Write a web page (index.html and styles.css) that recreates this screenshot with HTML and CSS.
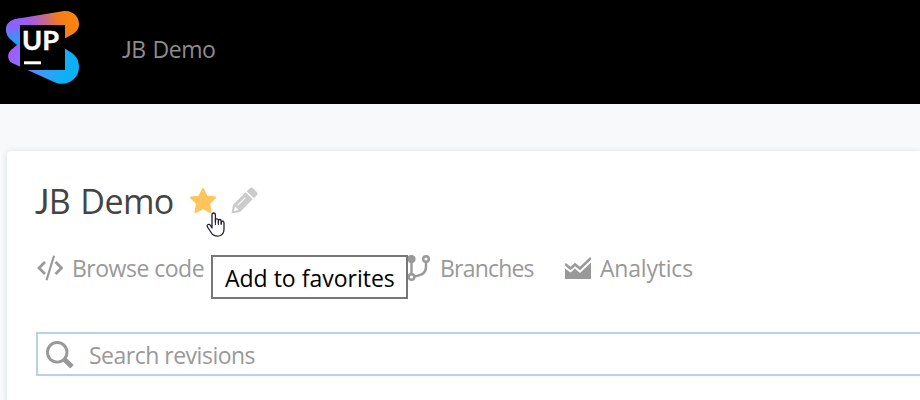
FILE: index.html
```html
<!DOCTYPE html>
<html lang="en">
<head>
<meta charset="utf-8">
<title>JB Demo</title>
<link rel="stylesheet" href="styles.css">
</head>
<body>
<header class="topbar">
  <svg class="logo" viewBox="0 0 100 100" width="100" height="100" aria-label="Upsource">
    <defs>
      <linearGradient id="top" gradientUnits="userSpaceOnUse" x1="7" y1="36" x2="78" y2="20">
        <stop offset="0" stop-color="#1aa5ff"/><stop offset=".16" stop-color="#8b62ff"/><stop offset=".35" stop-color="#a35ce8"/><stop offset=".58" stop-color="#c96a86"/><stop offset=".72" stop-color="#ee7b22"/><stop offset="1" stop-color="#ff8608"/>
      </linearGradient>
      <linearGradient id="left" gradientUnits="userSpaceOnUse" x1="12" y1="20" x2="16" y2="44">
        <stop offset="0" stop-color="#9a5cff"/><stop offset=".35" stop-color="#8268ff"/><stop offset="1" stop-color="#12a9f8"/>
      </linearGradient>
      <linearGradient id="bottom" gradientUnits="userSpaceOnUse" x1="10" y1="50" x2="66" y2="72">
        <stop offset="0" stop-color="#a65aff"/><stop offset=".3" stop-color="#8270ff"/><stop offset=".65" stop-color="#369dfa"/><stop offset="1" stop-color="#0cb0f5"/>
      </linearGradient>
    </defs>
    <path fill="url(#bottom)" d="M20 42.500 11.500 49.500C7 53 7 60 12 63L53 81.500C65 88 79 80 79 67C79 60 76 56 72 53L64 48Z"/>
    <path fill="url(#top)" d="M17 18.800 64 11C73 10 79 17 79 24C79 29 76 32 73 34L64 39 20 44C10 38 6 34 6 29C6 24 10 20 17 18.800Z"/>
    <path fill="url(#left)" d="M20 18.500C12 19 6 23 6 30C6 34 8 37 10 39L17 45 20 43Z"/>
    <path d="M20 25H65V70H20Z"/>
    <path fill="#fff" d="M24 61.300H41V64.300H24Z"/>
    <text class="logo-text" x="22" y="49.700" textLength="37" lengthAdjust="spacingAndGlyphs">UP</text>
  </svg>
  <span class="project"><span class="initial">J</span>B Demo</span>
</header>
<main class="card">
  <div class="heading">
    <h1><span class="initial">J</span>B Demo</h1>
    <svg class="star" viewBox="0 0 28 28" width="28" height="28"><path fill="#ffc45b" stroke="#ffc45b" stroke-width="2" stroke-linejoin="round" d="M14 2 17.600 9.400 26 10.500 20 16.500 21.500 25 14 21.200 6.500 25 8 16.500 2 10.500 10.400 9.400Z"/></svg>
    <svg class="pencil" viewBox="0 0 28 28" width="28" height="28"><g transform="translate(1.500 26.500) rotate(-45)" fill="#cbcbcb"><path fill-rule="evenodd" d="M0 0 7-5H25V5H7ZM3.500 0 7.500 2.500V-2.500ZM10-2V-.9H21V-2Z"/><path d="M26.500-5H30.500Q33-5 33-3V3Q33 5 30.500 5H26.500Z"/></g></svg>
  </div>
  <nav class="links">
    <a class="code"><svg viewBox="0 0 26 26" width="26" height="26" fill="none" stroke="#999"><path stroke-width="2.700" d="M8 7 2 13 8 19M18.500 7 24.500 13 18.500 19"/><path stroke-width="2.200" d="M17 .8 9.500 25.200"/></svg><span>Browse code</span></a>
    <a class="branches"><svg viewBox="0 0 26 26" width="26" height="26" fill="none" stroke="#999" stroke-width="2.400"><circle cx="7.500" cy="4" r="2.900" fill="#999"/><circle cx="22" cy="4" r="2.800"/><circle cx="7.500" cy="22" r="2.800"/><path d="M7.500 7V19M22 7V12C22 18 18 20 10.500 21.500"/></svg><span>Branches</span></a>
    <a class="analytics"><svg viewBox="0 0 26 26" width="26" height="26"><path fill="#999" d="M0 13.500 5.500 17.500 10 13.500 15 18 26 7.500V24H0Z"/><path fill="none" stroke="#999" stroke-width="2.500" d="M0 9 5.500 13.500 10 9.500 15 13.500 26 3"/></svg><span>Analytics</span></a>
  </nav>
  <div class="search">
    <svg viewBox="0 0 30 30" width="30" height="30" fill="none" stroke="#999"><circle cx="12.200" cy="12.300" r="9.800" stroke-width="2.900"/><path stroke-width="5" d="M18.500 18.500 27 26.800"/></svg>
    <span>Search revisions</span>
  </div>
</main>
<div class="tooltip"><span>Add to favorites</span></div>
<svg class="cursor" viewBox="0 0 20 26" width="20" height="26"><path fill="#fff" stroke="#202030" stroke-width="1.300" stroke-linejoin="round" d="M6 16V3Q6 1 7.700 1Q9.400 1 9.400 3V10V8Q9.400 6.800 10.900 6.900Q12.400 7 12.400 8.500V11V8.500Q12.600 7.300 14 7.500Q15.200 7.700 15.200 9.500V11.500Q15.300 8.500 17 9.200Q18 9.600 18 11V17Q18 22 14.500 23.500Q10 25 6.500 22.500L1.500 15Q.7 13 2.200 12.500Q3.500 12 4.500 13.500Z"/><path fill="none" stroke="#202030" d="M9.400 8V13M12.400 9V13M15.200 10V13"/></svg>
</body>
</html>
```
FILE: styles.css
```css
* { box-sizing: border-box; }
body {
  margin: 0;
  height: 400px;
  overflow: hidden;
  position: relative;
  background: #f7f9fa;
  font-family: "Open Sans", "Noto Sans", sans-serif;
  font-size: 23px;
  color: #999;
}
svg { display: block; flex: none; }
span, h1 { white-space: nowrap; }
.topbar { height: 104px; display: flex; background: #000; }
.logo-text { font: 700 26.5px Lato, sans-serif; fill: #fff; stroke: #fff; stroke-width: .4px; }
.initial { font-family: Lato, sans-serif; }
.project { margin: 33px 0 0 22px; line-height: 32px; color: #8c8c8c; letter-spacing: -.5px; word-spacing: 1.5px; }
.card {
  margin: 47px 0 0 7px;
  width: 913px;
  height: 249px;
  padding: 25px 0 0 29px;
  background: #fff;
  border-radius: 4px 0 0 0;
  box-shadow: 0 1px 5px 1px #dce3e8;
}
.heading { display: flex; height: 50px; align-items: center; }
h1 { margin: 0; width: 153px; font-size: 34px; font-weight: 400; line-height: 50px; color: #444; letter-spacing: -.6px; word-spacing: 2px; }
h1 .initial { margin-left: -1px; }
.pencil { margin-left: 13px; }
.links { display: flex; height: 34px; margin: 25px 0 0 1px; }
.links a { display: flex; align-items: center; gap: 9px; }
.code { width: 367px; }
.branches { width: 161px; }
.branches svg { margin-right: 1px; }
.code span { letter-spacing: -.5px; }
.branches span { letter-spacing: -.8px; }
.analytics span { letter-spacing: -.2px; }
.search {
  height: 44px;
  margin-top: 47px;
  padding: 1px 0 0 7px;
  display: flex;
  align-items: center;
  gap: 14px;
  border: 2px solid #b8d1e5;
  border-right: 0;
}
.search span { letter-spacing: -.5px; }
.tooltip {
  position: absolute;
  left: 211px;
  top: 255px;
  width: 197px;
  height: 44px;
  padding: 1px 0 0 12px;
  display: flex;
  align-items: center;
  border: 2px solid #777;
  background: #fff;
  color: #000;
}
.cursor { position: absolute; left: 206px; top: 212px; }
```
